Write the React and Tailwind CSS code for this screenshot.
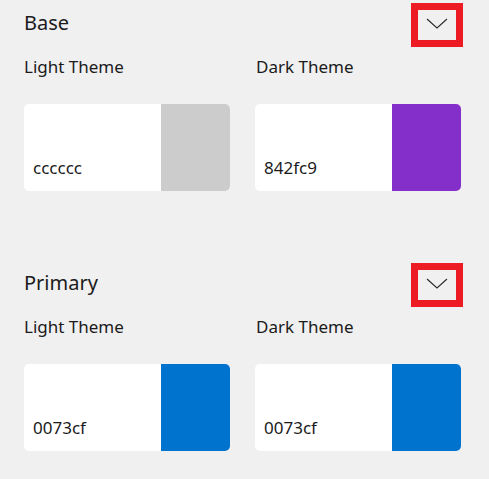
const sections = [
  {
    title: "Base",
    light: { hex: "cccccc", color: "bg-[#cccccc]" },
    dark: { hex: "842fc9", color: "bg-[#842fc9]" },
  },
  {
    title: "Primary",
    light: { hex: "0073cf", color: "bg-[#0073cf]" },
    dark: { hex: "0073cf", color: "bg-[#0073cf]" },
  },
];

function Chevron() {
  return (
    <svg width="22" height="11" viewBox="0 0 22 11" fill="none">
      <polyline points="1,1 11,10 21,1" stroke="#2b2b2b" strokeWidth="1.1" />
    </svg>
  );
}

function Swatch({ hex, color }) {
  return (
    <div className="flex h-[87px] w-[206px] overflow-hidden rounded-[5px] bg-white">
      <div className="flex flex-1 items-end pb-[12px] pl-[9px] text-[17px] leading-[23px] text-[#1b1b1b]">
        {hex}
      </div>
      <div className={`w-[69px] ${color}`}></div>
    </div>
  );
}

export default function App() {
  return (
    <div
      className="h-[479px] w-[489px] overflow-hidden bg-[#f0f0f0] pl-[24px] pr-[26px]"
      style={{ fontFamily: '"Noto Sans", "Open Sans", sans-serif' }}
    >
      {sections.map((s, i) => (
        <div key={s.title} className={`pt-[3px] ${i > 0 ? "mt-[69px]" : ""}`}>
          <div className="flex h-[44px] items-center justify-between">
            <span className="-mt-[5px] text-[20px] leading-[26px] text-[#1b1b1b]">{s.title}</span>
            <div className="flex h-[44px] w-[52px] items-center justify-center border-[7px] border-[#ed1c24] pb-[3px]">
              <Chevron />
            </div>
          </div>
          <div className="mt-[8px] grid grid-cols-[206px_206px] gap-x-[25px] text-[17px] leading-[23px] text-[#1b1b1b]">
            <span>Light Theme</span>
            <span className="pl-[1px]">Dark Theme</span>
          </div>
          <div className="mt-[26px] grid grid-cols-[206px_206px] gap-x-[25px]">
            <Swatch {...s.light} />
            <Swatch {...s.dark} />
          </div>
        </div>
      ))}
    </div>
  );
}
